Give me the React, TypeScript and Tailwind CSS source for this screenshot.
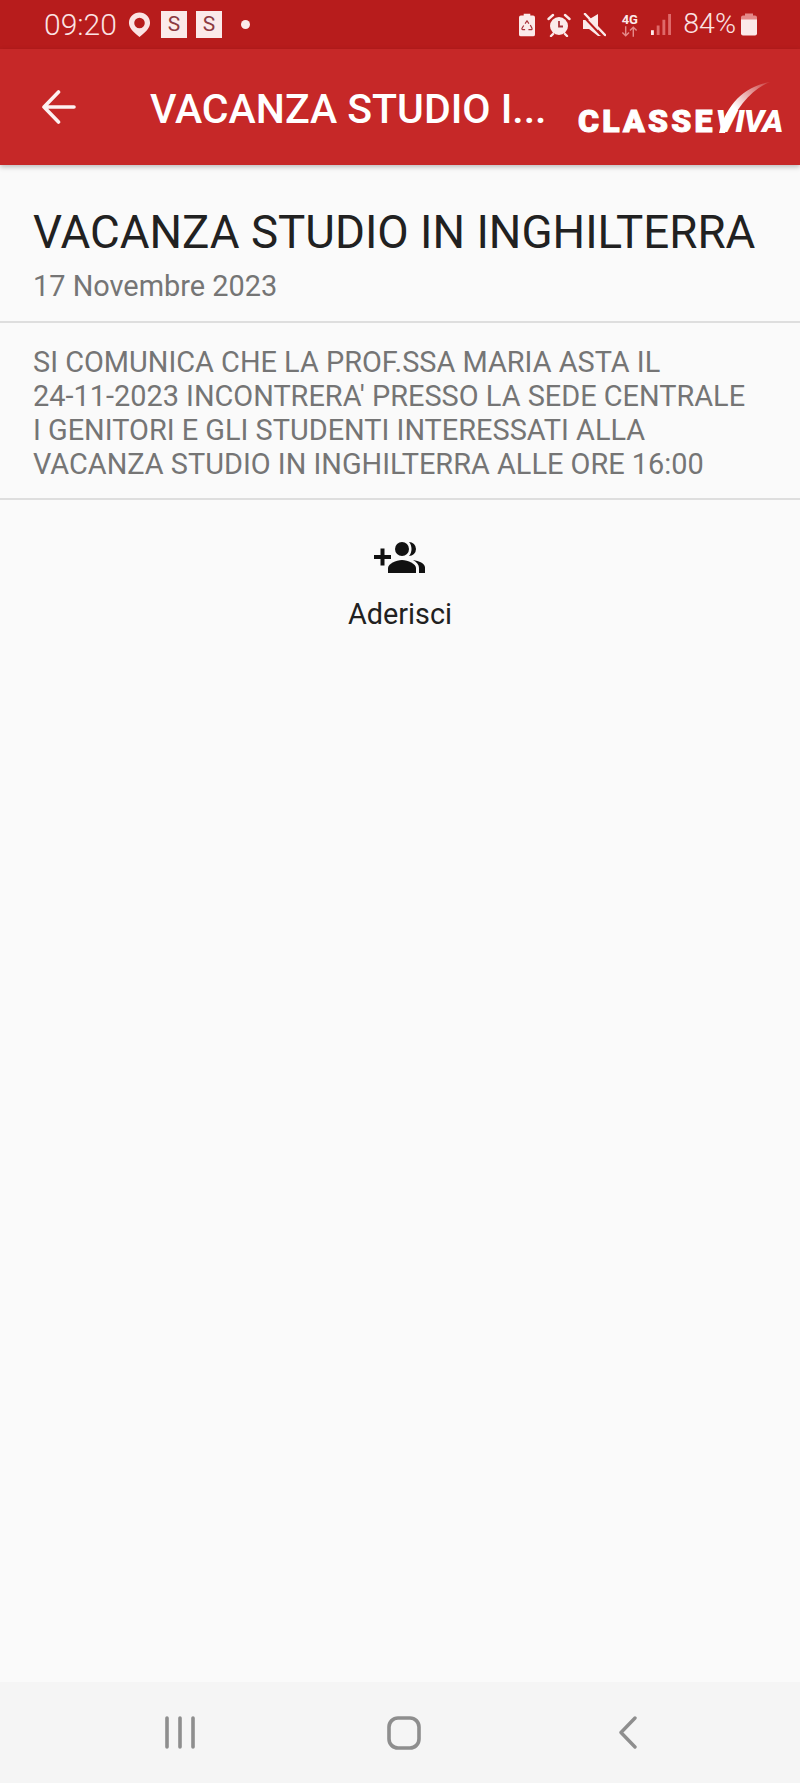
import React from 'react';

const noticeLines = [
    'SI COMUNICA CHE LA PROF.SSA MARIA ASTA IL',
    "24-11-2023 INCONTRERA' PRESSO LA SEDE CENTRALE",
    'I GENITORI E GLI STUDENTI INTERESSATI ALLA',
    'VACANZA STUDIO IN INGHILTERRA ALLE ORE 16:00',
];

const StatusBar = () => (
    <div className="h-[49px] shrink-0 bg-[#b71c1c] flex items-center justify-between pl-[44px] pr-[43px] text-[#fbe4e4]">
        <div className="flex items-center">
            <span className="w-[72px] text-[30px] leading-none font-light whitespace-nowrap">09:20</span>
            {/* location pin */}
            <svg width="23" height="27" viewBox="0 0 24 27" className="ml-[12px]">
                <path fillRule="evenodd" fill="#fbe4e4" d="M12 1C5.9 1 1 5.8 1 11.8c0 4.4 2.9 8.6 11 14.7 8.100-6.100 11-10.300 11-14.700C23 5.800 18.100 1 12 1zm0 5.500a5.500 5.500 0 1 1 0 11 5.500 5.500 0 0 1 0-11z" />
            </svg>
            <span className="ml-[10px] w-[26px] h-[27px] bg-[#fbeaea] text-[#8c3a42] text-[21px] flex items-center justify-center">S</span>
            <span className="ml-[9px] w-[26px] h-[27px] bg-[#fbeaea] text-[#8c3a42] text-[21px] flex items-center justify-center">S</span>
            <span className="ml-[19px] w-[9px] h-[9px] rounded-full bg-[#fbeaea]" />
        </div>
        <div className="flex items-center">
            {/* battery saver */}
            <svg width="16" height="24" viewBox="0 0 17 24">
                <path fill="#fbeaea" d="M5 0h7v2h3a2 2 0 0 1 2 2v18a2 2 0 0 1-2 2H2a2 2 0 0 1-2-2V4a2 2 0 0 1 2-2h3z" />
                <path fill="none" stroke="#a8323a" strokeWidth="1.300" strokeLinejoin="round" d="M6.500 10.500l2-3 2 3M12 12l1.800 3.500a1 1 0 0 1-1 1.500H10M6.500 17H4a1 1 0 0 1-.8-1.500L5 12.500" />
            </svg>
            {/* alarm */}
            <svg width="24" height="24" viewBox="0 0 24 24" className="ml-[12px]">
                <circle cx="12" cy="13" r="9" fill="#fbeaea" />
                <path fill="none" stroke="#a8323a" strokeWidth="1.800" d="M12 8v5.500h4" />
                <path fill="none" stroke="#fbeaea" strokeWidth="2.400" strokeLinecap="round" d="M1.500 6L6 2M22.500 6L18 2M6 21l-2 2M18 21l2 2" />
            </svg>
            {/* muted speaker */}
            <svg width="24" height="24" viewBox="0 0 24 24" className="ml-[11px]">
                <path fill="#fbeaea" d="M1 7h5l10-6v17l3 5H16L7 16H1z" />
                <path stroke="#b71c1c" strokeWidth="2" d="M-1 1l20 21" />
                <path stroke="#fbeaea" strokeWidth="2.500" strokeLinecap="round" d="M3 1l20 21" />
            </svg>
            {/* mobile data */}
            <div className="ml-[14px] w-[19px] flex flex-col items-center text-[#fbeaea]">
                <span className="text-[13px] leading-[13px] font-bold">4G</span>
                <svg width="19" height="11" viewBox="0 0 20 11">
                    <path fill="none" stroke="#e58a8a" strokeWidth="1.500" d="M6 0v10M2.500 6.500L6 10l3.500-3.500M14 11V1M10.500 4.500L14 1l3.500 3.500" />
                </svg>
            </div>
            {/* signal bars */}
            <svg width="20" height="21" viewBox="0 0 21 22" className="ml-[12px]">
                <path fill="#fbeaea" d="M0 17h3v5H0z" />
                <path fill="#df6a6a" d="M6 12h3v10H6zM12 6h3v16h-3zM18 0h3v22h-3z" />
            </svg>
            <span className="ml-[12px] text-[28.500px] leading-none font-light whitespace-nowrap">84%</span>
            {/* battery */}
            <svg width="16" height="23" viewBox="0 0 16 22" className="ml-[5px]">
                <path fill="#e58a8a" d="M4 0h8v2h2a2 2 0 0 1 2 2v3H0V4a2 2 0 0 1 2-2h2z" />
                <path fill="#fbeaea" d="M0 6h16v14a2 2 0 0 1-2 2H2a2 2 0 0 1-2-2z" />
            </svg>
        </div>
    </div>
);

const ClasseVivaLogo = () => (
    <div className="relative w-[205px] h-[50px] shrink-0">
        <svg width="60" height="56" viewBox="0 0 60 56" className="absolute left-[138px] top-[-8px]">
            <defs>
                <linearGradient id="swoosh" x1="0" y1="1" x2="1" y2="0">
                    <stop offset="0.400" stopColor="#ffffff" />
                    <stop offset="1" stopColor="#ffffff" stopOpacity="0.100" />
                </linearGradient>
            </defs>
            <path fill="url(#swoosh)" d="M3 54C9 30 25 8 54 3 36 10 21 28 9 54z" />
        </svg>
        <span className="absolute left-[0px] bottom-[0px] text-white text-[32px] leading-[32px] font-black tracking-[3.200px] whitespace-nowrap [-webkit-text-stroke:1px_white]">
            CLASSE<span className="italic tracking-[-0.900px] [-webkit-text-stroke:0]">VIVA</span>
        </span>
    </div>
);

const AppBar = () => (
    <div className="relative z-10 h-[116px] shrink-0 bg-[#c62828] shadow-[0_2px_5px_rgba(0,0,0,0.25)] flex items-center text-white">
        <svg width="36" height="34" viewBox="0 0 36 34" className="ml-[41px] shrink-0">
            <path fill="none" stroke="#fdf1f1" strokeWidth="3.600" strokeLinecap="round" strokeLinejoin="round" d="M33 17H3M17.500 2L3 17l14.500 15" />
        </svg>
        <span className="ml-[73px] mt-[4px] w-[400px] text-[41px] leading-none font-medium whitespace-nowrap">VACANZA STUDIO I...</span>
        <div className="ml-[28px] mt-[10px]">
            <ClasseVivaLogo />
        </div>
    </div>
);

const JoinAction = () => (
    <div className="flex flex-col items-center pt-[41px]">
        <svg width="52" height="32" viewBox="0 0 52 32" fill="#111111">
            <path d="M0 14h6.500V7.500h4V14H17v4h-6.500v6.500h-4V18H0z" />
            <circle cx="28" cy="8" r="7" />
            <path d="M14 32v-5c0-4 8-8 14-8s14 4 14 8v5z" />
            <path d="M35 1a7 7 0 0 1 0 14c1.800-2 2.500-4.500 2.500-7S36.800 3 35 1z" />
            <path d="M39 19c6 .8 12 3.500 12 7.500V32h-6v-5c0-3-2-5.800-6-8z" />
        </svg>
        <span className="mt-[24px] text-[28.800px] leading-[34px] text-[#212121]">Aderisci</span>
    </div>
);

const NavBar = () => (
    <div className="h-[101px] shrink-0 bg-[#f5f5f5] flex items-center pl-[165px]">
        <svg width="30" height="33" viewBox="0 0 30 33">
            <path stroke="#8e8e8e" strokeWidth="3.600" strokeLinecap="round" d="M2 2v29M15 2v29M28 2v29" />
        </svg>
        <svg width="34" height="34" viewBox="0 0 34 34" className="ml-[192px]">
            <rect x="2" y="2" width="30" height="30" rx="9" fill="none" stroke="#8e8e8e" strokeWidth="3.600" />
        </svg>
        <svg width="18" height="33" viewBox="0 0 18 33" className="ml-[198px]">
            <path fill="none" stroke="#8e8e8e" strokeWidth="3.400" strokeLinecap="round" strokeLinejoin="round" d="M16 2L2 16.500 16 31" />
        </svg>
    </div>
);

export default function App() {
    return (
        <div className="w-[800px] h-[1783px] bg-[#fafafa] flex flex-col font-['Roboto',sans-serif]">
            <StatusBar />
            <AppBar />

            <div className="flex-1 flex flex-col">
                {/* Notice header */}
                <div className="h-[158px] pl-[33px] pr-[34px] pt-[41px] border-b-2 border-[#dedede]">
                    <h1 className="text-[45.700px] leading-[54px] text-[#212121] whitespace-nowrap">VACANZA STUDIO IN INGHILTERRA</h1>
                    <p className="mt-[8px] text-[28.900px] leading-[36px] text-[#757575]">17 Novembre 2023</p>
                </div>

                {/* Notice body */}
                <div className="h-[177px] pl-[33px] pr-[34px] pt-[22px] border-b-2 border-[#dedede]">
                    {noticeLines.map(line => (
                        <p key={line} className="text-[28.900px] leading-[34px] text-[#757575] whitespace-nowrap">{line}</p>
                    ))}
                </div>

                <JoinAction />
            </div>

            <NavBar />
        </div>
    );
}
